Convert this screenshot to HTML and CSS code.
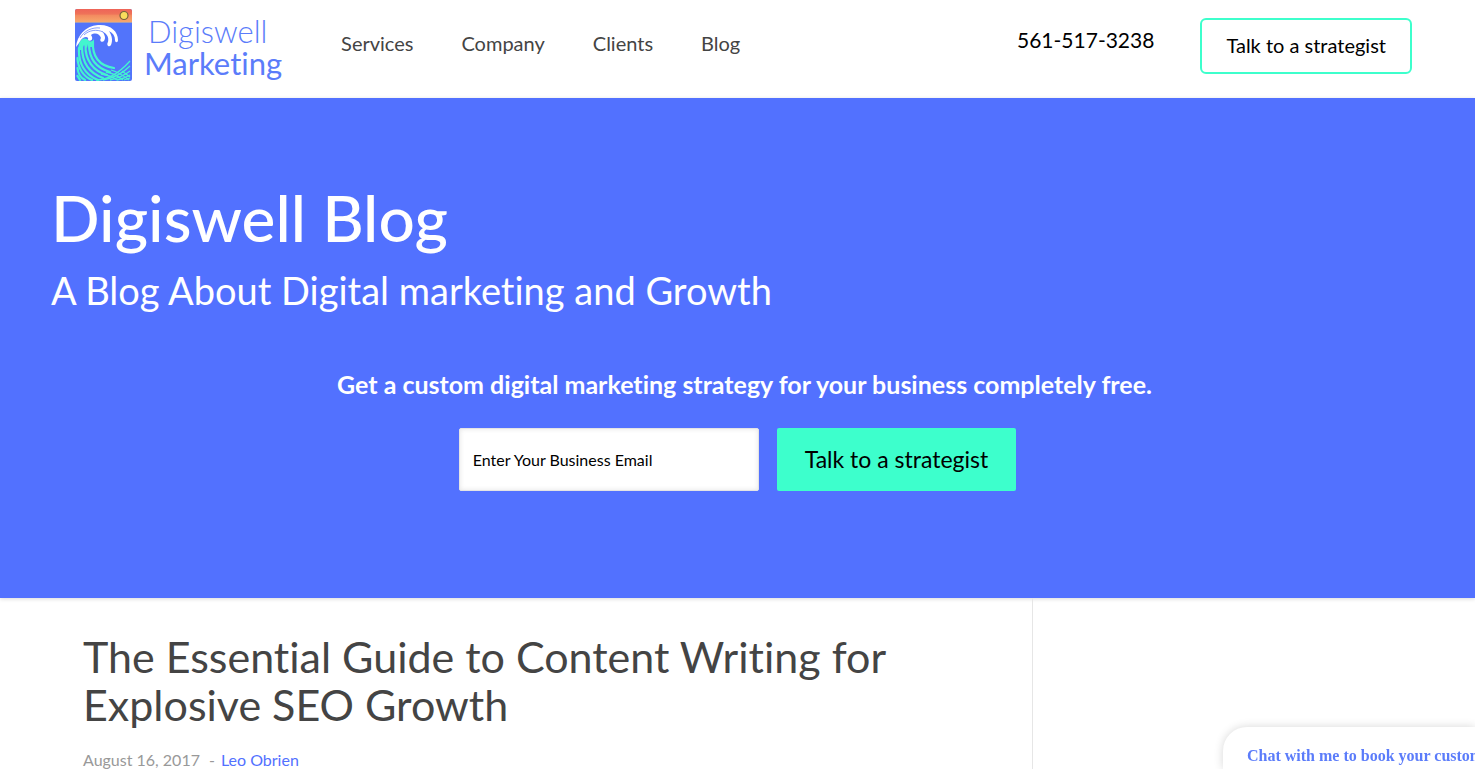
FILE: index.html
```html
<!DOCTYPE html>
<html lang="en">
<head>
<meta charset="utf-8">
<meta name="viewport" content="width=device-width, initial-scale=1">
<title>Digiswell Blog</title>
<link rel="stylesheet" href="styles.css">
</head>
<body>
<header class="site-header">
  <a class="logo" href="#">
    <svg class="logo-mark" viewBox="0 0 57 72" aria-hidden="true">
      <defs>
        <linearGradient id="sky" x1="0" y1="0" x2="0" y2="1">
          <stop offset="0" stop-color="#ee6458"/>
          <stop offset=".38" stop-color="#ef7259"/>
          <stop offset=".5" stop-color="#f38b60"/>
          <stop offset="1" stop-color="#f6a86c"/>
        </linearGradient>
        <clipPath id="card"><rect width="57" height="72" rx="2"/></clipPath>
      </defs>
      <g clip-path="url(#card)">
        <rect width="57" height="72" fill="#5274fb"/>
        <rect width="57" height="13" fill="url(#sky)"/>
        <path d="M0 13.500H57" stroke="#a79bb5" stroke-width="1"/>
        <circle cx="49" cy="6.500" r="4" fill="#f9dc5c" stroke="#77603c" stroke-width="1.200"/>
        <path d="M4 35C6 29 11 28 14 32C16 33 18 32 19 30L19 38L15 38L13 35L12 39L9 36L7 41L3 41Z" fill="#43f5cf"/>
        <g fill="none" stroke="#43f5cf" stroke-width="2.200" stroke-linecap="round">
          <path d="M18 33C17 47 24 57 39 59"/>
          <path d="M14 35C14 49 21 59 35 63"/>
          <path d="M10.500 36C10 51 18 62 32 66"/>
          <path d="M7 38C7 53 14 64 28 69"/>
          <path d="M4 39C3 54 10 66 23 71"/>
          <path d="M2.500 49C3 60 9 68 17 71"/>
          <path d="M2.500 59C3 64 6 69 10 71"/>
          <path d="M2.500 67L5 71"/>
        </g>
        <g fill="none" stroke="#43f5cf" stroke-width="1.300">
          <path d="M21 71C35 71 46 62 55 52"/>
          <path d="M28 71C39 69 48 64 55 57"/>
          <path d="M35 71C43 69 50 66 55 62"/>
          <path d="M42 71C47 70 52 68 55 66"/>
          <path d="M49 71L55 69"/>
          <path d="M31 63C38 64 43 67 48 71"/>
          <path d="M36 61C43 63 49 67 54 71"/>
          <path d="M26 65C33 66 38 68 42 71"/>
          <path d="M47 62L55 68"/>
        </g>
        <path d="M1 38C2 27 10 17 23 16C35 15 43 22 43 31C43 34 40 34 40 31C40 27 38 24 34 22C37 27 38 31 36 36C34 39 31 36 33 33C34 28 32 25 27 22C30 26 31 29 29 32C27 34 24 32 26 29C25 25 20 23 16 26C19 30 16 33 13 31C14 28 11 27 8 29C5 31 4 35 1 38Z" fill="#fff"/>
        <g fill="none" stroke="#5274fb" stroke-width=".700">
          <path d="M5 29C9 22 17 18 25 19"/>
          <path d="M9 26C14 21 22 20 28 23"/>
        </g>
      </g>
    </svg>
    <span class="logo-text"><span class="logo-light">Digiswell</span><span class="logo-bold">Marketing</span></span>
  </a>
  <nav class="main-nav" aria-label="Main">
    <a href="#">Services</a>
    <a href="#">Company</a>
    <a href="#">Clients</a>
    <a href="#">Blog</a>
  </nav>
  <a class="phone" href="tel:5615173238">561-517-3238</a>
  <button class="header-cta" type="button">Talk to a strategist</button>
</header>

<section class="hero">
  <h1>Digiswell Blog</h1>
  <p class="tagline">A Blog About Digital marketing and Growth</p>
  <form class="signup">
    <label class="pitch" for="email">Get a custom digital marketing strategy for your business completely free.</label>
    <div class="signup-row">
      <input id="email" type="email" placeholder="Enter Your Business Email">
      <button type="submit">Talk to a strategist</button>
    </div>
  </form>
</section>

<main class="content">
  <article class="post">
    <h2>The Essential Guide to Content Writing for Explosive SEO Growth</h2>
    <p class="meta"><time datetime="2017-08-16">August 16, 2017</time><span>-</span><a href="#">Leo Obrien</a></p>
  </article>
</main>

<aside class="chat">Chat with me to book your custom</aside>
</body>
</html>
```
FILE: styles.css
```css
* { box-sizing: border-box; }

body {
  margin: 0;
  min-height: 100vh;
  display: flex;
  flex-direction: column;
  overflow: hidden;
  background: #fff;
  color: #444;
  font-family: Lato, "Open Sans", sans-serif;
  font-variant-ligatures: none;
}

a { color: inherit; text-decoration: none; }
button, input { font: inherit; font-variant-ligatures: none; }

.site-header {
  display: flex;
  align-items: flex-start;
  padding: 9px 63px 17px 75px;
}

.logo { display: flex; gap: 12px; color: #5b7cfa; }
.logo-mark { display: block; width: 57px; height: 72px; }
.logo-text {
  display: flex;
  flex-direction: column;
  padding-top: 6px;
  font-size: 31px;
  line-height: 32px;
}
.logo-light { padding-left: 4px; font-weight: 300; }

.main-nav {
  display: flex;
  gap: 48px;
  margin-left: 59px;
  padding-top: 22px;
  font-size: 20px;
  line-height: 24px;
}

.phone {
  margin-left: auto;
  padding-top: 17px;
  color: #000;
  font-size: 21px;
  line-height: 28px;
}

.header-cta {
  margin: 9px 0 0 46px;
  padding: 13px 24px 15px;
  border: 2px solid #3dffcc;
  border-radius: 6px;
  background: #fff;
  color: #000;
  font-size: 20px;
  line-height: 24px;
}

.hero {
  padding: 82px 51px 107px;
  background: #5271ff;
  color: #fff;
  box-shadow: 0 1px 4px rgba(0, 0, 0, .15);
}

h1, h2, p { margin: 0; font-weight: 400; }
h1 { font-size: 64px; line-height: 76px; font-weight: 500; }
.tagline { padding-top: 12px; font-size: 38px; line-height: 44px; }

.signup {
  display: flex;
  flex-direction: column;
  align-items: center;
  gap: 28px;
  padding-top: 56px;
}
.pitch { padding-left: 14px; font-size: 25px; line-height: 32px; font-weight: 700; }
.signup-row { display: flex; gap: 18px; }
.signup input {
  width: 300px;
  padding: 0 13px;
  border: 1px solid #e4e4e4;
  border-radius: 2px;
  background: #fff;
  box-shadow: inset 0 0 5px rgba(0, 0, 0, .1);
  color: #000;
  font-size: 16px;
}
.signup input::placeholder { color: #000; opacity: 1; }
.signup button {
  padding: 17px 28px 18px;
  border: 0;
  border-radius: 2px;
  background: #3dffcc;
  color: #000;
  font-size: 23px;
  line-height: 28px;
}

.content { flex: 1; display: flex; }
.post {
  width: 70%;
  padding: 35px 83px 0;
  border-right: 1px solid #e6e6e6;
}
h2 { font-size: 43px; line-height: 48px; }
.meta {
  display: flex;
  padding-top: 19px;
  color: #999;
  font-size: 16px;
  line-height: 24px;
}
.meta span { padding: 0 6px 0 9px; }
.meta a { color: #5271ff; }

.chat {
  position: fixed;
  right: 0;
  bottom: 0;
  width: 252px;
  height: 42px;
  padding: 18px 0 0 24px;
  overflow: hidden;
  border-radius: 24px 0 0 0;
  background: #fff;
  box-shadow: 0 0 10px rgba(0, 0, 0, .16);
  color: #5b7cfa;
  font: 700 16px/22px "Liberation Serif", serif;
  white-space: nowrap;
}
```
